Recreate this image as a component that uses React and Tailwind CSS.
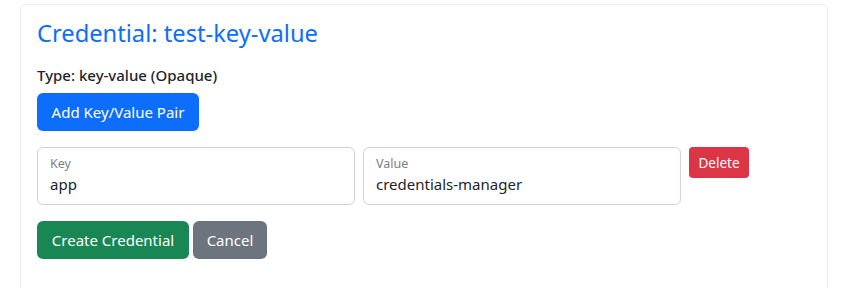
export default function App() {
  const font = { fontFamily: '"Noto Sans", "Open Sans", sans-serif' };
  return (
    <div className="w-[851px] h-[288px] bg-white overflow-hidden" style={font}>
      <div className="ml-[20px] mt-[4px] w-[808px] h-[320px] border border-[#eeeeee] rounded-[6px] px-[16px] pt-[13px] shadow-[0_0_2px_rgba(0,0,0,0.04)]">
        <h3 className="text-[#0d6efd] text-[23.7px] leading-[31px] mb-[14px]">Credential: test-key-value</h3>
        <p className="text-[#212529] text-[15px] leading-[24px] font-medium mb-[6px]">Type: key-value (Opaque)</p>
        <button className="bg-[#0d6efd] text-white text-[15px] leading-[24px] px-[12px] py-[7px] rounded-[6px] w-[162px] h-[38px]">Add Key/Value Pair</button>
        <div className="flex items-start mt-[16px] gap-[8px]">
          <div className="w-[318px] h-[58px] border border-[#ced4da] rounded-[6px] px-[12px] pt-[8px]">
            <div className="text-[12.5px] leading-[16px] text-[#7b8086]">Key</div>
            <div className="text-[15px] leading-[22px] text-[#212529] mt-[1px]">app</div>
          </div>
          <div className="w-[318px] h-[58px] border border-[#ced4da] rounded-[6px] px-[12px] pt-[8px]">
            <div className="text-[12.5px] leading-[16px] text-[#7b8086]">Value</div>
            <div className="text-[15px] leading-[22px] text-[#212529] mt-[1px]">credentials-manager</div>
          </div>
          <button className="bg-[#dc3545] text-white text-[13.5px] leading-[20px] rounded-[4px] w-[60px] h-[31px]">Delete</button>
        </div>
        <div className="flex mt-[16px] gap-[4px]">
          <button className="bg-[#198754] text-white text-[15px] leading-[24px] rounded-[6px] w-[152px] h-[38px]">Create Credential</button>
          <button className="bg-[#6c757d] text-white text-[15px] leading-[24px] rounded-[6px] w-[74px] h-[38px]">Cancel</button>
        </div>
      </div>
    </div>
  );
}
